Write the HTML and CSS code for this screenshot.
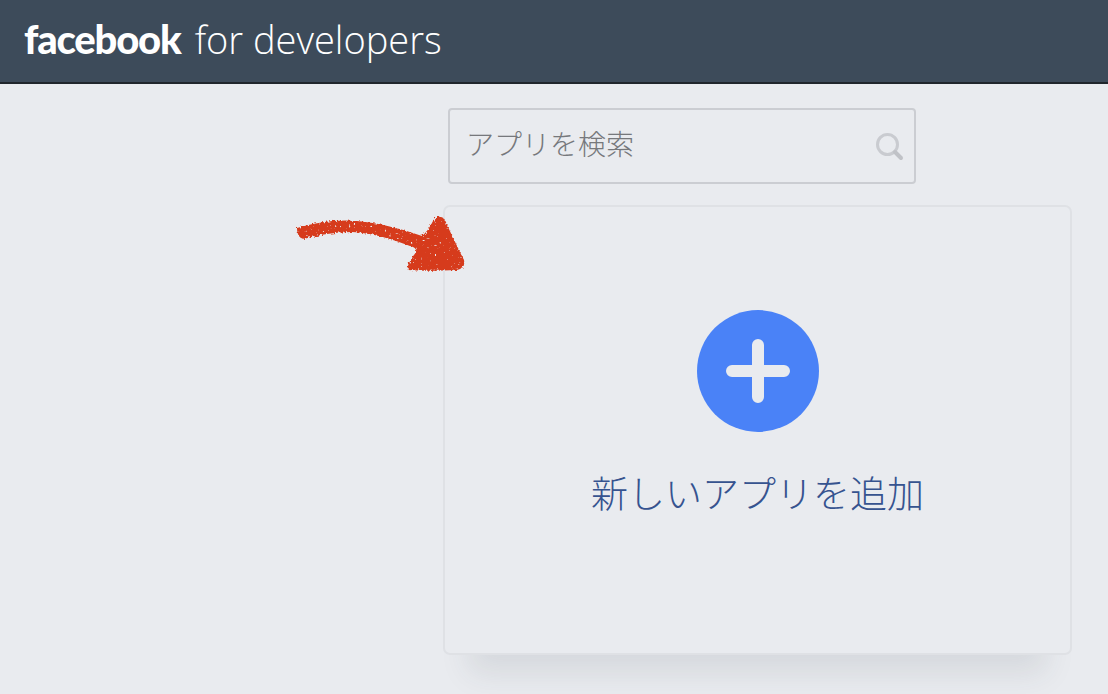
FILE: index.html
```html
<!DOCTYPE html>
<html lang="ja">
<head>
<meta charset="utf-8">
<title>facebook for developers</title>
<link rel="stylesheet" href="styles.css">
</head>
<body>
<header class="topbar">
  <span class="brand">facebook</span>
  <span class="brand-sub">for developers</span>
</header>
<main class="content">
  <svg class="arrow" width="200" height="100" viewBox="0 0 200 100" aria-hidden="true">
    <defs>
      <filter id="rough" x="-10%" y="-20%" width="120%" height="140%">
        <feTurbulence type="fractalNoise" baseFrequency="0.5" numOctaves="2" seed="4" result="n"/>
        <feDisplacementMap in="SourceGraphic" in2="n" scale="5" result="shape"/>
        <feTurbulence type="fractalNoise" baseFrequency="0.42" numOctaves="1" seed="11"/>
        <feColorMatrix type="matrix" values="0 0 0 0 0  0 0 0 0 0  0 0 0 0 0  9 0 0 0 -6.1" result="holes"/>
        <feComposite in="shape" in2="holes" operator="out"/>
      </filter>
    </defs>
    <path filter="url(#rough)" fill="#d63a1c" d="M17 38 C35 33 55 29 77 31 C100 33 122 39 142 46 C146 43 150 37 153 31 C155 26 162 25 165 30 C170 42 179 60 184 70 C185 77 182 79 176 80 C160 81 140 81 128 80 C126 76 132 68 136 62 C137 59 134 57 130 56 C112 49 92 43 72 42 C55 42 38 45 24 49 C19 48 17 44 17 38 Z"/>
  </svg>
  <div class="search">
    <span class="search-text">アプリを検索</span>
    <svg class="search-icon" width="30" height="30" viewBox="0 0 30 30" aria-hidden="true">
      <circle cx="13.5" cy="13.5" r="10" fill="none" stroke="#c9cbd0" stroke-width="3"/>
      <path d="M21 21 L27 27" stroke="#c0c2c7" stroke-width="4" stroke-linecap="round"/>
    </svg>
  </div>
  <section class="card">
    <div class="plus-circle">
      <svg width="64" height="64" viewBox="0 0 64 64" aria-hidden="true">
        <path d="M32 6 V58 M6 32 H58" stroke="#e9ebef" stroke-width="12" stroke-linecap="round"/>
      </svg>
    </div>
    <div class="card-label">新しいアプリを追加</div>
  </section>
</main>
</body>
</html>
```

FILE: styles.css
```css
html, body {
  margin: 0;
  height: 100%;
}
body {
  background: #e9ebef;
  overflow: hidden;
  font-family: "Noto Sans CJK JP", "Noto Sans", sans-serif;
}
.topbar {
  box-sizing: border-box;
  height: 84px;
  background: #3d4b5a;
  border-bottom: 2px solid #20262c;
  padding: 0 24px 4px;
  display: flex;
  align-items: center;
  gap: 14px;
  color: #fff;
}
.brand {
  font-family: Lato, sans-serif;
  font-weight: 900;
  font-size: 40px;
  letter-spacing: -1.2px;
}
.brand-sub {
  font-family: "Open Sans", sans-serif;
  font-weight: 300;
  font-size: 38px;
}
.content {
  position: relative;
  padding: 24px 36px 0 443px;
}
.search {
  box-sizing: border-box;
  width: 468px;
  height: 76px;
  margin-left: 5px;
  border: 2px solid #cbcdd2;
  border-radius: 4px;
  display: flex;
  align-items: center;
  justify-content: space-between;
  padding: 0 10px 0 17px;
}
.search-text {
  font-size: 28px;
  font-weight: 300;
  line-height: 34px;
  margin: -6px 0 0 -1px;
  color: #76787c;
}
.search-icon {
  margin-top: 0;
}
.card {
  box-sizing: border-box;
  width: 629px;
  height: 450px;
  margin-top: 21px;
  border: 2px solid #dfe1e5;
  border-radius: 7px;
  background: #e9ebef;
  box-shadow: 0 44px 28px -26px rgba(50, 55, 70, 0.1);
  display: flex;
  flex-direction: column;
  align-items: center;
  padding-top: 103px;
}
.plus-circle {
  width: 122px;
  height: 122px;
  border-radius: 50%;
  background: #4a82f7;
  display: flex;
  align-items: center;
  justify-content: center;
}
.card-label {
  margin-top: 34px;
  font-size: 37px;
  font-weight: 300;
  line-height: 52px;
  color: #36538f;
}
.arrow {
  position: absolute;
  left: 280px;
  top: 106px;
}
```
